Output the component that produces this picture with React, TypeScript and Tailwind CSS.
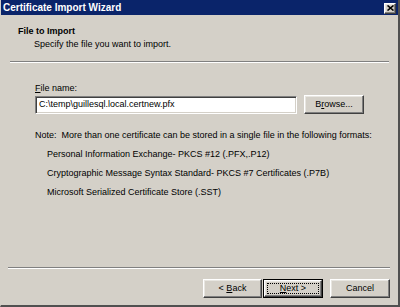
import React from 'react'

const raised =
  'border border-t-white border-l-white border-r-[#404040] border-b-[#404040] shadow-[inset_-1px_-1px_0_#808080,inset_1px_1px_0_#e8e6e1]'

const WizardButton = ({ children, width, isDefault }: { children: React.ReactNode; width: string; isDefault?: boolean }) => {
  if (isDefault) {
    return (
      <div className={`${width} h-[19px] border border-black bg-[#d4d0c8]`}>
        <div className={`h-full w-full ${raised} flex items-center justify-center p-[2px]`}>
          <div className="flex h-full w-full items-center justify-center border border-dotted border-black">
            {children}
          </div>
        </div>
      </div>
    )
  }
  return (
    <div className={`${width} h-[19px] ${raised} flex items-center justify-center bg-[#d4d0c8]`}>{children}</div>
  )
}

const App = () => {
  return (
    <div
      className="flex h-[307px] w-[400px] flex-col border-r-2 border-b-2 border-r-[#505050] border-b-[#505050] border-l border-l-[#d4d0c8] bg-[#d4d0c8] text-[9px] leading-[11px] text-black"
      style={{ fontFamily: '"Liberation Sans", Arial, sans-serif' }}
    >
      {/* title bar */}
      <div className="flex h-[15px] items-center justify-between bg-[#0a246a] pl-[2px] pr-[2px]">
        <span className="text-[10px] font-bold text-white">Certificate Import Wizard</span>
        <div className={`mt-[1px] flex h-[11px] w-[12px] items-center justify-center bg-[#d4d0c8] ${raised}`}>
          <svg width="7" height="6" viewBox="0 0 7 6">
            <path d="M0.5 0.5 L6.5 5.5 M6.5 0.5 L0.5 5.5" stroke="black" strokeWidth="1.6" />
          </svg>
        </div>
      </div>

      {/* header */}
      <div className="h-[46px] pl-[17px] pt-[11px]">
        <div className="font-bold">File to Import</div>
        <div className="ml-[16px] mt-[2px]">Specify the file you want to import.</div>
      </div>
      <div className="mx-[9px] border-t border-b border-t-[#808080] border-b-white" />

      {/* body */}
      <div className="pl-[34px]">
        <div className="mt-[20px]">
          <span className="underline">F</span>ile name:
        </div>
        <div className="mt-[1px] flex items-center gap-[7px]">
          <div className="flex h-[18px] w-[262px] items-center border border-t-[#808080] border-l-[#808080] border-r-white border-b-white bg-white pl-[3px] shadow-[inset_1px_1px_0_#404040,inset_-1px_-1px_0_#d4d0c8]">
            C:\temp\guillesql.local.certnew.pfx
          </div>
          <WizardButton width="w-[60px]">
            <span>
              B<span className="underline">r</span>owse...
            </span>
          </WizardButton>
        </div>
        <div className="mt-[16px] whitespace-pre">Note:  More than one certificate can be stored in a single file in the following formats:</div>
        <div className="ml-[12px]">
          <div className="mt-[8px]">Personal Information Exchange- PKCS #12 (.PFX,.P12)</div>
          <div className="mt-[8px]">Cryptographic Message Syntax Standard- PKCS #7 Certificates (.P7B)</div>
          <div className="mt-[8px]">Microsoft Serialized Certificate Store (.SST)</div>
        </div>
      </div>

      {/* footer */}
      <div className="mt-auto">
        <div className="ml-[7px] mr-[8px] border-t border-b border-t-[#808080] border-b-white" />
        <div className="mb-[7px] mt-[10px] flex justify-end pr-[8px]">
          <WizardButton width="w-[59px]">
            <span>
              &lt; <span className="underline">B</span>ack
            </span>
          </WizardButton>
          <div className="ml-[1px]">
            <WizardButton width="w-[60px]" isDefault>
              <span>
                <span className="underline">N</span>ext &gt;
              </span>
            </WizardButton>
          </div>
          <div className="ml-[7px]">
            <WizardButton width="w-[60px]">Cancel</WizardButton>
          </div>
        </div>
      </div>
    </div>
  )
}

export default App
